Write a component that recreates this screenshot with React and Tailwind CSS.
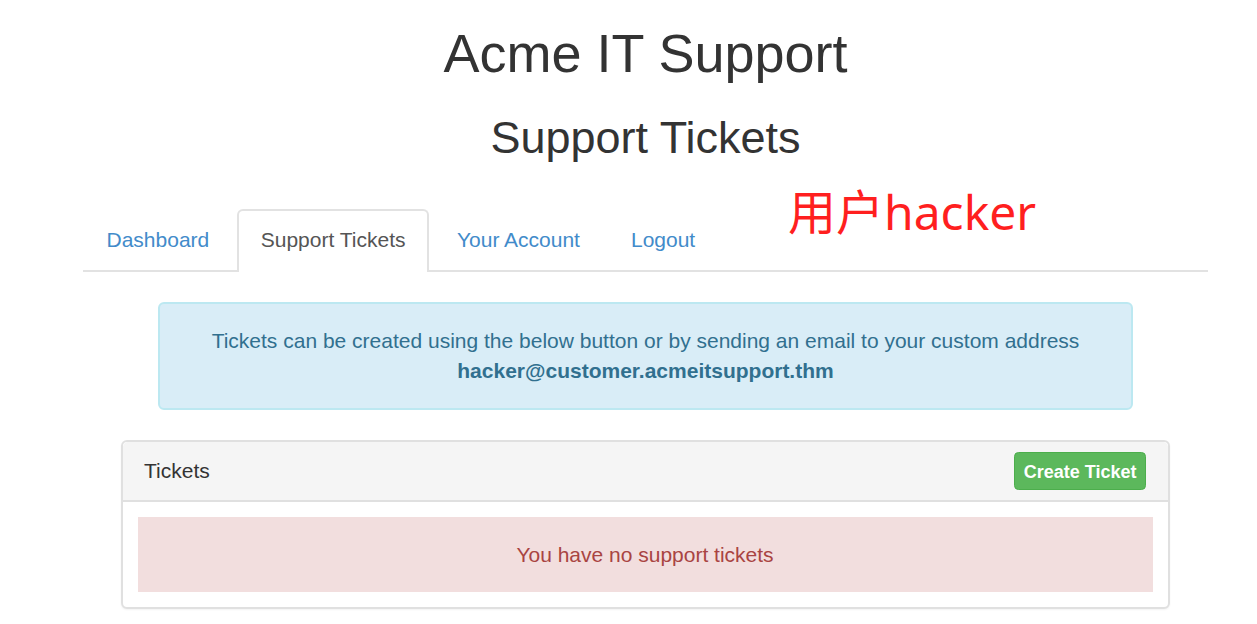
export default function App() {
  const tabs = ['Dashboard', 'Support Tickets', 'Your Account', 'Logout'];
  return (
    <div
      className="relative min-h-[624px] bg-white text-[#333]"
      style={{ fontFamily: '"Liberation Sans", Arial, sans-serif' }}
    >
      <div className="ml-[83px] w-[1125px] pt-[23.6px]">
        <h1 className="text-center text-[54px] leading-[1.1]">Acme IT Support</h1>
        <h2 className="mt-[30px] text-center text-[45px] leading-[1.1]">Support Tickets</h2>

        <ul className="mt-[47px] flex border-b-2 border-[#e2e2e2]">
          {tabs.map((t) =>
            t === 'Support Tickets' ? (
              <li
                key={t}
                className="-mb-[2px] mr-[4px] rounded-t-[6px] border-2 border-b-0 border-[#e2e2e2] bg-white px-[22px] pb-[17px] pt-[14px] text-[21px] leading-[30px] text-[#555]"
              >
                {t}
              </li>
            ) : (
              <li
                key={t}
                className="mr-[4px] px-[23.5px] pb-[15px] pt-[16px] text-[21px] leading-[30px] text-[#428bca]"
              >
                {t}
              </li>
            )
          )}
        </ul>

        <div className="ml-[75px] mt-[30px] w-[975px] rounded-[6px] border-2 border-[#bce8f1] bg-[#d9edf7] px-[22.5px] py-[22px] text-center text-[21px] leading-[30px] text-[#31708f]">
          <p>Tickets can be created using the below button or by sending an email to your custom address</p>
          <p className="font-bold">hacker@customer.acmeitsupport.thm</p>
        </div>

        <div className="ml-[37.5px] mt-[30px] w-[1049px] rounded-[6px] border-2 border-[#e0e0e0] bg-white shadow-[0_1px_2px_rgba(0,0,0,0.05)]">
          <div className="flex items-center justify-between rounded-t-[5px] border-b-2 border-[#e0e0e0] bg-[#f5f5f5] py-[10px] pl-[21.5px] pr-[21.5px]">
            <span className="text-[21px] leading-[30px]">Tickets</span>
            <button
              type="button"
              className="flex h-[38px] items-center rounded-[4.5px] border border-[#4cae4c] bg-[#5cb85c] px-[8.5px] pt-[3px] text-[18px] font-bold text-white"
            >
              Create Ticket
            </button>
          </div>
          <div className="p-[15px]">
            <div className="bg-[#f2dede] px-[22.5px] py-[22.5px] text-center text-[21px] leading-[30px] text-[#a94442]">
              You have no support tickets
            </div>
          </div>
        </div>
      </div>

      <div
        className="absolute left-[788px] top-[188px] text-[48px] leading-none text-[#ff1f1f]"
        style={{ fontFamily: '"Noto Sans", "Noto Sans CJK SC", sans-serif' }}
      >
        用户hacker
      </div>
    </div>
  );
}
